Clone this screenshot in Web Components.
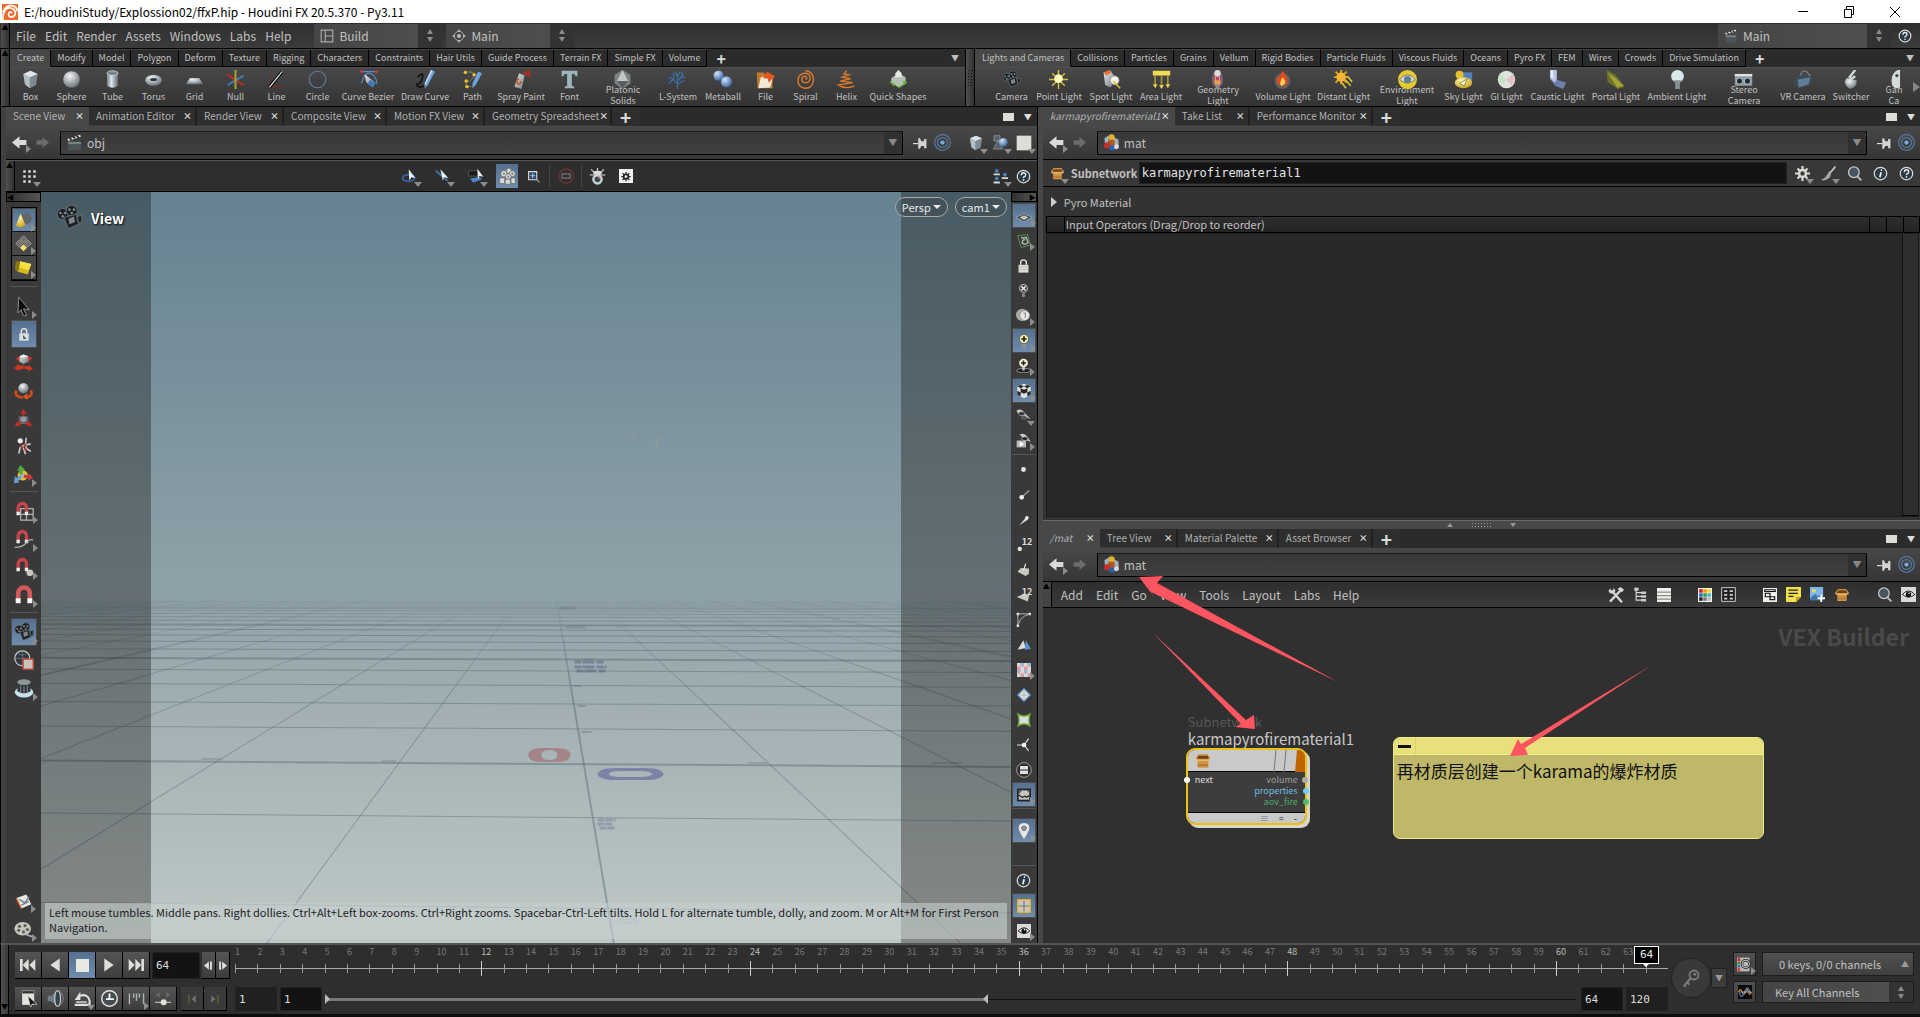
<!DOCTYPE html>
<html lang="en">
<head>
<meta charset="utf-8">
<title>E:/houdiniStudy/Explossion02/ffxP.hip - Houdini FX 20.5.370 - Py3.11</title>
<style>
    html, body {
        margin: 0;
        height: 100%;
        overflow: hidden;
        background: #2e2e2e;
    }
    body {
        --ui: "Noto Sans CJK SC", "Noto Sans", sans-serif;
        --mono: "DejaVu Sans Mono", "Liberation Mono", monospace;
        --text: #c0c0c0;
        --active: linear-gradient(#56708f, #6f8cad);
        font: 11px/16px var(--ui);
        color: var(--text);
    }
</style>
</head>
<body>
<app-shell>
    <title-bar slot="top">E:/houdiniStudy/Explossion02/ffxP.hip - Houdini FX 20.5.370 - Py3.11</title-bar>
    <menu-bar slot="top"></menu-bar>
    <shelf-row slot="top"></shelf-row>
    <scene-pane slot="left"></scene-pane>
    <param-pane slot="right"></param-pane>
    <network-pane slot="right"></network-pane>
    <play-bar slot="bottom"></play-bar>
</app-shell>

<script>
// shared gradients, repeated in every icon because ids do not cross shadow roots
const DEFS = `<defs>
    <linearGradient id="s" x1="0" y1="0" x2="1" y2="1"><stop offset="0" stop-color="#e8ecee"/><stop offset="1" stop-color="#6b767c"/></linearGradient>
    <linearGradient id="t" x1="0" y1="0" x2="1" y2="0"><stop offset="0" stop-color="#738088"/><stop offset=".4" stop-color="#dfe6ea"/><stop offset="1" stop-color="#5c676e"/></linearGradient>
    <radialGradient id="r" cx=".4" cy=".3" r=".7"><stop offset="0" stop-color="#f4f6f7"/><stop offset="1" stop-color="#6a757b"/></radialGradient>
    <radialGradient id="b" cx=".35" cy=".3" r=".7"><stop offset="0" stop-color="#d5e5f7"/><stop offset="1" stop-color="#3e6ba6"/></radialGradient>
    <radialGradient id="g" cx=".4" cy=".3" r=".8"><stop offset="0" stop-color="#fff7a8"/><stop offset="1" stop-color="#c59a10"/></radialGradient>
</defs>`;

const CAMERA = `<g fill="#1d2124" stroke="#5f686e" stroke-width="1"><circle cx="6" cy="9" r="5"/><circle cx="14" cy="6" r="5"/><path d="M7 12l11-3 2 9-9 4z"/><path d="M19 11l4-1v6l-3 1z"/></g><g fill="#7c868c"><circle cx="4" cy="8" r="1.200"/><circle cx="8" cy="8" r="1.200"/><circle cx="6" cy="11" r="1.200"/><circle cx="12" cy="5" r="1.200"/><circle cx="16" cy="5" r="1.200"/><circle cx="14" cy="8" r="1.200"/></g><path d="M11 13l5-2 1 5-5 2z" fill="#7d878d"/>`;
const MAGNET = `<path d="M5 14V8a5 5 0 0 1 10 0v6" fill="none" stroke="#c8464b" stroke-width="4"/><path d="M3 13h4v4H3zM13 13h4v4h-4z" fill="#f0f0f0"/>`;
const BULB = `<circle cx="12" cy="9" r="5.500" fill="#3a3d3e" stroke="#b9b9b9" stroke-width="1.500"/><path d="M10 16h4v5h-4z" fill="#8c8c8c"/>`;
const BOX = `<path d="M2 8l4-5h12l4 5-3 2v11H5V10z" fill="#cf9345"/><path d="M6 5h12l2 4H4z" fill="#6e431b"/><path d="M2 8l3 2h14l3-2 0 3-3 1H5l-3-1z" fill="#e8b872"/><path d="M5 16h14v3H5z" fill="#b87d33"/>`;
const LOCK = `<path d="M8 11V8a4 4 0 0 1 8 0v3" fill="none" stroke="#e6e6e6" stroke-width="2"/><path d="M5 11h14v11H5z" fill="#e0e0da"/>`;
const CUBE = `<path d="M3 5l9-4 9 4-2 14-8 4-6-5z" fill="#7f8a91"/><path d="M3 5l9-4 9 4-10 4z" fill="#dfe5e8"/><path d="M3 5l8 4v14l-6-5z" fill="#b4bfc5"/>`;
const CLAP = `<path d="M3 11h18v12H3z" fill="#4d5458"/><path d="M3 11h18v3H3z" fill="#7b8387"/><path d="M2 7l18-6 1 3-18 6z" fill="#ddd"/><path d="M5 6l3 2M10 4l3 2M15 3l3 2" stroke="#111" stroke-width="2"/>`;
const MAT = `<path d="M2 6l6-4v9l-5 4z" fill="#9fb3c8"/><path d="M14 4l8 4v9l-6 2z" fill="#a5b0ba"/><circle cx="12" cy="5" r="4.500" fill="#e0b52e"/><path d="M8 8h8l1 9H8z" fill="#b4571c"/><circle cx="6" cy="16" r="4.500" fill="#c9302b"/><path d="M9 16h8v7H9z" fill="#2f62ac"/><circle cx="19" cy="18" r="3.500" fill="#d6dade"/>`;
const RING = `<circle cx="12" cy="12" r="10" fill="#2c3a44" stroke="#d9d9d9" stroke-width="2"/>`;

const ICONS = {
    logo: `<rect width="24" height="24" fill="#ee6b2d"/><path d="M2 24c-2-8 2-19 11-18 7 1 9 8 5 12-4 3-9 1-8-3 0-3 4-4 5-1M1 12C5 4 10 2 14 2c6 1 9 5 9 9" fill="none" stroke="#fff" stroke-width="2.600"/>`,
    layout: `<path d="M2 2h20v20H2zM9 2v20M9 12h13" fill="none" stroke="#aaa" stroke-width="2"/>`,
    radial: `<circle cx="12" cy="12" r="8" fill="none" stroke="#aaa" stroke-width="1.600"/><circle cx="12" cy="12" r="3.500" fill="#bbb"/><path d="M12 0l3 5H9zM12 24l3-5H9zM0 12l5-3v6zM24 12l-5-3v6z" fill="#bbb"/>`,
    clap: CLAP,
    help: RING + `<path d="M8.500 10q0-4 3.500-4t3.500 3-3.500 4v1.500" fill="none" stroke="#eee" stroke-width="2.200"/><circle cx="12" cy="17.500" r="1.400" fill="#eee"/>`,
    info: RING + `<path d="M13 10l-2 8M12.500 6.500h2" fill="none" stroke="#eee" stroke-width="2.800"/>`,
    box: CUBE,
    sphere: `<circle cx="12" cy="12" r="10.500" fill="url(#r)"/>`,
    tube: `<path d="M5 4v16q7 5 14 0V4z" fill="url(#t)"/><ellipse cx="12" cy="4" rx="7" ry="3" fill="#77848b" stroke="#d5dce0"/>`,
    torus: `<ellipse cx="12" cy="13" rx="10.500" ry="7" fill="url(#r)"/><ellipse cx="12" cy="12" rx="4.500" ry="2" fill="#30373b"/>`,
    grid: `<path d="M6 10h12l5 8H1z" fill="url(#r)"/>`,
    null: `<path d="M2 6l20 13" stroke="#c62a22" stroke-width="2.500"/><path d="M2 19L22 7" stroke="#3f79b8" stroke-width="2.500"/><path d="M12 0v24" stroke="#a8a52a" stroke-width="2.500"/>`,
    line: `<path d="M6 3v18h16M2 17l18 5" stroke="#7b2b2b" fill="none"/><path d="M3 22L19 2" stroke="#111" stroke-width="4.500"/><path d="M3 22L19 2" stroke="#ddd" stroke-width="1.500"/>`,
    circle: `<circle cx="12" cy="12" r="10.500" fill="none" stroke="#5d7da6" stroke-width="1.400"/>`,
    bezier: `<path d="M2 2h20M3 17Q7 4 12 4q9 0 11 14" stroke="#5b89c0" fill="none" stroke-width="1.500"/><circle cx="3" cy="2" r="1.800" fill="#d33"/><circle cx="22" cy="2" r="1.800" fill="#d33"/><path d="M7 5l14 11-4 6-8-7z" fill="url(#s)"/><path d="M14 12l7 4-4 6-6-5z" fill="#4279b9"/>`,
    draw: `<path d="M2 9q8-8 6 1t-8 8q4 6 10 2" stroke="#111" fill="none" stroke-width="2.200"/><path d="M19 0l5 2-9 17-4 4v-6z" fill="#6fa3dd"/><path d="M19 0l2 1-9 18-1-2z" fill="#c4dcf5"/>`,
    path: `<path d="M3 3q15-2 10 6T4 14v7h6" stroke="#b9b9a4" fill="none" stroke-dasharray="2 1"/><path d="M19 2l5 2-8 15-4 4v-6z" fill="#6fa3dd"/><g fill="#ecc51d"><circle cx="3" cy="3" r="2.200"/><circle cx="14" cy="6" r="2.200"/><circle cx="4" cy="14" r="2.200"/><circle cx="5" cy="21" r="2.200"/></g>`,
    spray: `<path d="M9 4l7 3-4 17-9-3z" fill="url(#s)"/><path d="M9 11q-4 1-2 6 4 2 4-3" stroke="#c52" fill="none" stroke-width="2"/><path d="M12 3l11-3v10z" fill="#b32d26" opacity=".85"/>`,
    font: `<path d="M2 1h20v7h-2l-2-3h-3v15l3 1v2H6v-2l3-1V5H6L4 8H2z" fill="#9db4bd"/>`,
    platonic: `<path d="M12 0l10 6v11l-10 7-10-7V6z" fill="#7d8383"/><path d="M12 0l7 14H5z" fill="#c2c7c7"/><path d="M12 24l7-10H5z" fill="#595e5e"/>`,
    lsystem: `<path d="M12 24V5M12 17L3 9M12 14l8-9M12 18l9-5M7 13V3M3 9l-2 3M16 9l6 1M12 9L9 2M12 8l3-6M6 12L1 17M18 7l-1-5" stroke="#3c6fa8" fill="none" stroke-width="1.600"/>`,
    metaball: `<circle cx="7" cy="7" r="6.500" fill="url(#b)"/><circle cx="17" cy="15" r="7" fill="url(#b)"/>`,
    file: `<path d="M1 3h9l2 3h9v17H2z" fill="#c4792c"/><path d="M6 9l16-2-4 15-15 1z" fill="#f1eadb"/><path d="M14 2l10 6-8 8-1-5-6-1z" fill="#e3591a"/>`,
    spiral: `<path d="M12 12c3-1 1-4-1-4-5 0-5 8 1 8 8 0 8-12-1-12-11 0-12 19 1 19 6 0 10-4 10-11C22 5 17 1 12 1" stroke="#d77b2c" fill="none" stroke-width="1.800"/>`,
    helix: `<path d="M12 1l-3 4 6 1-8 3 10 2-13 3 16 2-18 3q9 6 20 1" stroke="#d9792b" fill="none" stroke-width="1.800"/>`,
    quick: `<path d="M1 15l7-6 15 6-10 8z" fill="#5db02c"/><path d="M3 10l9-6 9 5v8l-9 4-9-5z" fill="#b5beb5"/><path d="M8 4l4-4 4 4v5H8z" fill="#e4e9e2"/><path d="M1 15l6 2-1 4zM18 13l5 3-5 4z" fill="#5db02c"/>`,
    camera: CAMERA,
    point: `<path d="M12 0v24M0 12h24M4 4l16 16M20 4L4 20" stroke="#d8bd38" stroke-width="1.800"/><circle cx="12" cy="11" r="5.500" fill="#fffbb8"/>`,
    spot: `<path d="M2 3l9-2 6 9-6 12-7-3z" fill="url(#s)"/><path d="M2 3l7-3 3 3-7 4z" fill="#e4742b"/><circle cx="16" cy="13" r="5.500" fill="#f6f4e4" stroke="#999"/><path d="M14 14l9 9" stroke="#d8c43a" stroke-width="2"/>`,
    area: `<path d="M1 1h22v6H1z" fill="#f1dd54"/><path d="M4 7v13M12 7v15M20 7v13" stroke="#ae9a32" stroke-width="2"/><path d="M1 18h6l-3 5zM9 19h6l-3 5zM17 18h6l-3 5z" fill="#e8d44b"/>`,
    geo: `<ellipse cx="12" cy="12" rx="7" ry="11" fill="#8d6590" opacity=".8"/><circle cx="12" cy="4" r="4" fill="#dcdce0"/><path d="M9 8h6l1 8-3 6h-2l-3-6z" fill="#e9a345"/><path d="M10 9h4v4h-4z" fill="#b33f91"/><path d="M10 18h4v6h-4z" fill="#8a8f96"/>`,
    volume: `<circle cx="12" cy="14" r="10" fill="#83837f" opacity=".5"/><path d="M12 1q8 9 6 16-6 7-12 0-3-5 2-9z" fill="#e04a1e"/><path d="M12 9q6 6 2 9-4 4-5-1 0-4 3-8z" fill="#ffd255"/>`,
    distant: `<path d="M9 0v18M0 9h18M2 2l14 14M16 2L2 16" stroke="#e3a522" stroke-width="2.500"/><circle cx="9" cy="9" r="6" fill="#f5b42d"/><path d="M14 12l7 8M10 16l5 7M17 8l6 7" stroke="#d8c43a" stroke-width="2"/>`,
    env: `<circle cx="12" cy="12" r="12" fill="#e6cb2f"/><path d="M2 12q10-12 20 0-10 9-20 0z" fill="#d9d9cf" stroke="#5f6a72"/><circle cx="12" cy="12" r="4.500" fill="#5f7f95"/>`,
    sky: `<path d="M8 3h15v10H8z" fill="#5681b6"/><circle cx="7" cy="6" r="5" fill="#e9bd32"/><ellipse cx="12" cy="16" rx="11" ry="7" fill="url(#g)"/><path d="M7 17l10-6-4 9z" fill="#fff6c0" stroke="#775"/>`,
    gi: `<circle cx="12" cy="12" r="11" fill="#dfe2dd"/><path d="M4 5q-5 8 2 14l6-7z" fill="#c8e0c6"/><path d="M20 5q5 8-2 14l-6-7z" fill="#e0bfc6"/>`,
    caustic: `<path d="M3 0h8v12l12 4-4 8-10-4-6-8z" fill="#6d80ac"/><path d="M3 0h8v11l-2 5-6-5z" fill="#b9c6e6"/><path d="M3 0h3l1 11-4-2z" fill="#e3eafa"/>`,
    portal: `<path d="M1 0l11 6 12 15-9 3L2 15z" fill="#6c7328"/><path d="M2 3l10 7 10 10-8 2z" fill="#a4a337"/>`,
    ambient: `<circle cx="12" cy="8" r="8" fill="#d9e8e8"/><path d="M7 13h10l-2 4H9zM9 17h6v7H9z" fill="#869191"/>`,
    stereo: `<path d="M1 5h22v15H1z" fill="#8f9696"/><path d="M1 5h22v3H1z" fill="#dfe3e3"/><circle cx="7" cy="14" r="4" fill="#1e2c3c" stroke="#ddd"/><circle cx="17" cy="14" r="4" fill="#1e2c3c" stroke="#ddd"/>`,
    vr: `<path d="M1 9l16-4 7 6-2 9-15 3-6-5z" fill="#3c4852"/><path d="M6 12l16-3-2 9-13 4z" fill="#5e7c96"/><path d="M9 7q3-8 8-5l5 6" fill="none" stroke="#6e7980" stroke-width="2"/>`,
    switcher: `<path d="M18 0l-8 10M18 8l-9 6" stroke="#d5d9d9" stroke-width="3"/><path d="M7 10l13 3q0 10-9 11-7-5-6-10z" fill="url(#r)"/>`,
    gang: `<path d="M16 0q-10 5-7 19 3 6 10 3V0z" fill="#d5dada"/><circle cx="15" cy="7" r="2" fill="#444"/>`,
    back: `<path d="M0 12L12 2v6h11v8H12v6z" fill="#d9dbd8"/>`,
    fwd: `<path d="M24 12L12 2v6H1v8h11v6z" fill="#6c6c6c"/>`,
    pin: `<path d="M0 13h9" stroke="#ddd" stroke-width="2"/><path d="M9 4h3l2 5h5V5h4v16h-4v-4h-5l-2 5H9z" fill="#d4d4d4"/>`,
    target: `<g fill="none" stroke="#55779d" stroke-width="1.800"><circle cx="12" cy="12" r="11"/><circle cx="12" cy="12" r="7"/></g><circle cx="12" cy="12" r="3" fill="#79aade"/>`,
    shapes: `<path d="M3 1h9v8H3zM2 21L9 8l7 13z" fill="#596066" stroke="#9aa1a5"/><circle cx="17" cy="11" r="6.500" fill="url(#b)"/>`,
    blank: `<path d="M1 1h22v22H1z" fill="#dcdcd8"/>`,
    dots: `<g fill="#d8d8d8"><path d="M2 2h4v4H2zM10 2h4v4h-4zM18 2h4v4h-4zM2 10h4v4H2zM10 10h4v4h-4zM18 10h4v4h-4zM2 18h4v4H2zM10 18h4v4h-4z"/></g>`,
    tumble: `<ellipse cx="10" cy="15" rx="9" ry="5" fill="none" stroke="#34609a" stroke-width="3"/><path d="M10 2l10 13-6-1-3 5z" fill="#eee"/>`,
    track: `<path d="M1 4l18 15" stroke="#4171ab" stroke-width="3"/><path d="M8 2l12 13-7-1-1 6z" fill="#eee"/>`,
    dolly: `<path d="M1 4h14v8H1z" fill="#1b1b1b" stroke="#666"/><path d="M3 16l14-3 4 4-13 5z" fill="#4f86c7"/><path d="M14 1l9 12-6-1-2 5z" fill="#eee"/>`,
    stones: `<g fill="#d9dad6" stroke="#6b6f70"><circle cx="7" cy="8" r="4.500"/><circle cx="14" cy="4" r="3.500"/><circle cx="19" cy="8" r="4"/><circle cx="13" cy="12" r="4"/><path d="M1 14h7v8H1zM9 16h7v7H9zM17 14h6v8h-6z"/></g><g fill="#777"><circle cx="7" cy="8" r="1.500"/><circle cx="19" cy="8" r="1.500"/><circle cx="13" cy="12" r="1.300"/></g>`,
    zoombox: `<path d="M3 3h15v15H3z" fill="#33435a" stroke="#ddd" stroke-width="2"/><path d="M10.500 6v9M6 10.500h9" stroke="#7fb6ef" stroke-width="2.500"/><path d="M17 17l6 6" stroke="#aaa" stroke-width="2"/>`,
    stop: `<circle cx="12" cy="12" r="10.500" fill="none" stroke="#6d3333" stroke-width="2"/><path d="M6 9h12v6H6z" fill="none" stroke="#6d6d6d" stroke-width="2"/>`,
    bug: `<path d="M3 2l6 6M21 2l-6 6M12 0v5M1 10h22" stroke="#d9d9d9" stroke-width="1.500"/><ellipse cx="12" cy="7" rx="6" ry="3" fill="#ddd"/><circle cx="12" cy="16" r="7.500" fill="#c9d2d2"/><circle cx="12" cy="16" r="4" fill="#2d4b56"/><circle cx="14" cy="14" r="1.500" fill="#e55"/>`,
    gearbox: `<path d="M0 0h24v24H0z" fill="#f2f2f2"/><circle cx="12" cy="13" r="4" fill="none" stroke="#222" stroke-width="3"/><path d="M12 5v4M12 17v4M4 13h4M16 13h4M6 7l3 3M18 7l-3 3M6 19l3-3M18 19l-3-3" stroke="#222" stroke-width="2"/>`,
    people: `<g fill="#4b7fc0"><circle cx="6" cy="3" r="3"/><circle cx="19" cy="9" r="3"/><circle cx="6" cy="15" r="3"/></g><path d="M1 7h10v3H1zM14 13h10v3H14zM1 20h10v3H1z" fill="#d8d8d8"/>`,
    cone: `<circle cx="16" cy="9" r="7.500" fill="#62676b"/><path d="M8 2l7 17q-7 5-14 0z" fill="url(#g)"/>`,
    tiles: `<path d="M12 1l5 5-5 5-5-5zM6 7l5 5-5 5-5-5zM18 7l5 5-5 5-5-5z" fill="#727068" stroke="#aaa"/><path d="M12 13l5 5-5 5-5-5z" fill="#f1dd76"/>`,
    ycube: `<path d="M7 3l16 4-5 15-14-4z" fill="#d7ba19"/><path d="M7 3l16 4-4 9-12-4z" fill="#f5e043"/><path d="M1 3l6 1-3 14-4-3z" fill="#8a7718"/>`,
    arrow: `<path d="M6 0l13 16-7-1 4 8-4 1-3-8-4 4z" fill="#0a0a0a" stroke="#aaa"/>`,
    lock: LOCK + `<path d="M10 13l6 6-5 1z" fill="#4b688c"/>`,
    move: `<path d="M0 19l6-5v2l6-1v5l-6 1v2zM24 20l-6-5v2l-5-1v4l5 1v2zM2 7l5-3v7zM23 6l-5-2v8z" fill="#d23620"/><path d="M7 4l5-2 6 2v7l-6 3-5-3z" fill="url(#s)"/><path d="M7 4l5-2 6 2-6 2z" fill="#eef1f3"/>`,
    rotate: `<path d="M3 12q-3 8 8 9M21 12q4 7-6 9" stroke="#cf4a1e" stroke-width="3.500" fill="none"/><path d="M17 15v9l-6-4z" fill="#e4571f"/><circle cx="12" cy="9" r="6.500" fill="url(#r)"/>`,
    scale: `<path d="M12 0l4 6H8zM1 22l3-7 5 6zM23 22l-7-1 4-6z" fill="#c52b22"/><path d="M6 9h12v10H6z" fill="#62686b"/><path d="M12 5v6M5 19l5-4M19 20l-5-4" stroke="#c52b22" stroke-width="2"/><circle cx="12" cy="13" r="3.500" fill="#8da0ab"/>`,
    pose: `<circle cx="7" cy="5" r="3.500" fill="#eee"/><path d="M15 1l-1 9-7 4-2 8M13 10l3 6 5 3M14 11l7-2M11 14l3 9" stroke="#d0d0d0" stroke-width="2" fill="none"/><path d="M12 9l3 3M13 15l2 3M8 12l2 3" stroke="#b7322d" stroke-width="3"/>`,
    handle: `<circle cx="11" cy="13" r="6.500" fill="#e3c32a"/><circle cx="11" cy="13" r="3" fill="#a4b9c9"/><path d="M8 0l6 6-3 1v5H7V8L4 7z" fill="#57a53a"/><path d="M24 16l-6 4v-3l-6-1 1-4 5 1 1-3z" fill="#c83b3b"/><path d="M0 23l1-9 2 2 5-3 2 4-5 3 2 2z" fill="#6d9dce"/>`,
    maggrid: `<path d="M8 9h15v14H8zM8 16h15M15 9v14" fill="none" stroke="#aeb4b2" stroke-width="1.500"/>` + MAGNET,
    magcurve: MAGNET + `<path d="M1 22q10 0 14-6 3-4 8-3" fill="none" stroke="#a9b5ae" stroke-width="1.500"/>`,
    magpoint: MAGNET + `<circle cx="19" cy="19" r="4" fill="#c9c9c0"/>`,
    magnet: `<path d="M5 17v-7a7 7 0 0 1 14 0v7" fill="none" stroke="#d45a5a" stroke-width="5.500"/><path d="M2 16h6v6H2zM16 16h6v6h-6z" fill="#f4f4f4"/>`,
    globe: `<circle cx="10" cy="10" r="9" fill="#30393b" stroke="#c5cccc" stroke-width="1.500"/><path d="M10 1v18M1 10h18M4 4q6 4 12 0" stroke="#69787b" fill="none"/><path d="M11 11h12v12H11z" fill="#c9c3bb" stroke="#d0453f" stroke-width="1.500"/>`,
    cap: `<ellipse cx="12" cy="17" rx="11" ry="6.500" fill="#c7e3ef"/><path d="M4 5h16v11q-8 5-16 0z" fill="#30383c"/><ellipse cx="12" cy="5" rx="8" ry="3.500" fill="#8e989c"/><path d="M8 9v8M12 10v8M16 9v8" stroke="#8e989c"/>`,
    sketch: `<path d="M2 7l14-5 7 14-14 6z" fill="#e8e8e2"/><path d="M2 8l7 14" stroke="#cf5a2d" stroke-width="2"/><path d="M6 9l8 5 6-9M9 17l10-5" stroke="#6d8091" stroke-width="2" fill="none"/>`,
    reel: `<ellipse cx="11" cy="11" rx="10.500" ry="8.500" fill="#c7c7bd"/><g fill="#5e5e58"><circle cx="7" cy="8" r="2"/><circle cx="14" cy="7" r="2"/><circle cx="17" cy="12" r="2"/><circle cx="6" cy="13" r="2"/><circle cx="12" cy="15" r="2"/></g><path d="M14 18l9 3" stroke="#aaa" stroke-width="2"/>`,
    plane: `<path d="M0 14l12-6 12 6-12 7z" fill="#3e4b58" stroke="#b9bab4"/><path d="M6 14l6-3 6 3-6 4z" fill="#d9d9d0"/><path d="M6 11l12 6M18 11L6 17" stroke="#9a9a94"/>`,
    greenbox: `<path d="M1 3l17-2 5 18-16 4z" fill="none" stroke="#5c9b4c" stroke-width="1.500"/><path d="M7 7l9-1 3 9q-7 5-10 0 0-6 5-5" fill="none" stroke="#aab9aa" stroke-width="2.500"/>`,
    padlock: LOCK + `<path d="M5 14h14M5 18h14" stroke="#aaa"/>`,
    bulboff: BULB + `<path d="M9 6l6 6M15 6l-6 6" stroke="#eee" stroke-width="2"/>`,
    balls: `<circle cx="10" cy="11" r="10" fill="#a8aca9"/><circle cx="14" cy="12" r="8" fill="#e4e5e1" stroke="#777"/><path d="M12 8h3v8" stroke="#999" stroke-width="2" fill="none"/>`,
    bulbon: `<circle cx="12" cy="9" r="7" fill="#ebe7a5" stroke="#444"/><path d="M9 16h6v6H9z" fill="#909090"/><path d="M12 5v8M8 9h8" stroke="#222" stroke-width="2.500"/>`,
    bulbring: `<ellipse cx="12" cy="20" rx="11" ry="3.500" fill="#191919" stroke="#ccc"/><circle cx="12" cy="8" r="7" fill="#f8f6d5"/><path d="M10 14h4v6h-4z" fill="#c9c9c9"/><path d="M12 4v8M8 8h8" stroke="#222" stroke-width="2.500"/>`,
    checker: `<path d="M2 5l10-4 10 4v13l-10 5-10-5z" fill="#e2e2dc"/><path d="M2 5l5-2 5 2-5 3zM12 5l5-2 5 2-5 3zM7 8l5 2v6l-5-2zM12 10l5-2v6l-5 2zM2 12l5 2v6l-5-2zM17 14l5-2v6l-5 2z" fill="#26292c"/>`,
    spoons: `<path d="M1 4q8-4 12 3l10 10-13-4-8-6z" fill="#c4c9c9"/><ellipse cx="9" cy="9" rx="5" ry="3" fill="#333" stroke="#aaa"/><ellipse cx="13" cy="15" rx="4" ry="2.500" fill="#444" stroke="#999"/>`,
    spoonplay: `<path d="M6 2q8-3 12 4l6 8-11-3z" fill="#c4c9c9"/><ellipse cx="14" cy="9" rx="5" ry="3" fill="#222" stroke="#ccc"/><path d="M1 12h15v11H1z" fill="#b8bab7"/><path d="M6 13v9l7-4z" fill="#fff"/>`,
    dot: `<circle cx="12" cy="12" r="3.500" fill="#e5e5de"/>`,
    normal: `<path d="M7 17L21 4" stroke="#a9b4b9" stroke-width="2"/><circle cx="8" cy="16" r="4" fill="#eee"/>`,
    normal2: `<path d="M4 21L16 7l3 4z" fill="#ddd"/><circle cx="17" cy="8" r="3" fill="#eee"/>`,
    num: `<circle cx="6" cy="19" r="3.500" fill="#e5e5de"/>`,
    prim: `<path d="M1 16l6-7 15 1v10l-6 4z" fill="#c8c8c3"/><path d="M12 14l4-13" stroke="#eee" stroke-width="2"/>`,
    primnum: `<path d="M1 16l11-5 9 2-2 10z" fill="#c8c8c3"/>`,
    curve: `<path d="M3 3h19M3 3v19M20 4Q6 8 4 20" stroke="#c8c8c8" fill="none" stroke-width="1.300"/><path d="M1 1h4v4H1zM20 1h4v4h-4zM1 20h4v4H1z" fill="#ddd"/>`,
    hull: `<path d="M1 20L11 4l4 13z" fill="#ddd"/><path d="M15 4l9 15-11 1z" fill="#5d8fcb"/>`,
    uv: `<path d="M0 0h24v24H0z" fill="#ded9d5"/><path d="M0 6h6v6H0zM12 6h6v6h-6zM6 18h6v6H6zM18 18h6v6h-6z" fill="#df9e9b"/><path d="M6 0h6v6H6zM18 0h6v6h-6zM0 12h6v6H0zM12 12h6v6h-6z" fill="#9cb8d8"/>`,
    diamond: `<path d="M12 1l11 11-11 11L1 12z" fill="#e2e2dc" stroke="#4f88c6" stroke-width="2"/><path d="M5 12h14M12 5v14" stroke="#999"/>`,
    greenstar: `<path d="M2 2q5 4 10 3 5 1 10-3-3 10 0 20-5-4-10-3-5-1-10 3 3-10 0-20z" fill="#ddded8" stroke="#6bb03e" stroke-width="2.500"/>`,
    axes: `<path d="M12 12H0M12 12l8-11M12 12l8 10" stroke="#e0e0da" stroke-width="2"/><circle cx="12" cy="12" r="4" fill="#f3f3ee"/>`,
    list: `<circle cx="12" cy="12" r="11" fill="#2e2e2e" stroke="#a0a0a0" stroke-width="1.500"/><path d="M6 6h12v12H6z" fill="#e0e0dc"/><path d="M6 12h12" stroke="#555" stroke-width="2"/>`,
    image: `<path d="M0 1h24v22H0z" fill="#222"/><path d="M3 4h18v16H3z" fill="#c4c5c0"/><path d="M3 11l6-7H3zM16 4l5 4V4z" fill="#555"/><path d="M3 12l6 4 5-2 3 2 4-3" fill="none" stroke="#222" stroke-width="2"/>`,
    mappin: `<path d="M12 0q9 0 8 9-2 6-8 15Q6 15 4 9q-1-9 8-9z" fill="#e6e6e2"/><circle cx="12" cy="8" r="3.500" fill="#8693a3" stroke="#555"/>`,
    quad: `<path d="M1 1h22v22H1z" fill="#cdc9be" stroke="#e0b21c" stroke-width="2.500"/><path d="M12 3v18M3 12h18" stroke="#777" stroke-width="2"/>`,
    eye: `<path d="M0 0h24v24H0z" fill="#d9d9d6"/><path d="M2 12q10-11 20 0-10 8-20 0z" fill="#f8f8f8" stroke="#111" stroke-width="1.500"/><circle cx="12" cy="12" r="4.500" fill="#111"/><circle cx="13" cy="10" r="1.300" fill="#fff"/>`,
    mat: MAT,
    crate: BOX,
    gear: `<path d="M12 0v24M0 12h24M4 4l16 16M20 4L4 20" stroke="#d9d9d6" stroke-width="3.500"/><circle cx="12" cy="12" r="7.500" fill="#d9d9d6"/><circle cx="12" cy="12" r="3.500" fill="#3a3a3a"/>`,
    brush: `<path d="M23 1L12 14" stroke="#ccc" stroke-width="2.500"/><path d="M13 8q6 6-1 12-8 5-12 2 8-2 13-14z" fill="#a8a8a2"/>`,
    lens: `<circle cx="11" cy="10" r="8.500" fill="#465560" stroke="#c9c9c9" stroke-width="2"/><path d="M16 16l7 7" stroke="#bbb" stroke-width="3"/>`,
    tools: `<path d="M6 6l15 17M20 4L3 22" stroke="#d5d5d5" stroke-width="3.500"/><path d="M1 5q0 5 5 5t5-5l-3-4v4H4V2z" fill="#d5d5d5"/><path d="M14 3l5-3 5 4-3 4z" fill="#d5d5d5"/>`,
    tree: `<path d="M5 1v20h10M5 9h10M5 15h10" stroke="#d6d6d6" stroke-width="1.800" fill="none"/><path d="M2 1h7v5H2zM13 7h8v4h-8zM13 13h8v4h-8zM13 19h8v4h-8z" fill="#c9c9c9"/>`,
    rows: `<path d="M0 0h24v24H0z" fill="#efefeb"/><path d="M0 7h24M0 13h24M0 19h24" stroke="#8d8d8d" stroke-width="2"/>`,
    palette: `<path d="M0 0h24v24H0z" fill="#f4f4f4"/><path d="M2 2h6v6H2z" fill="#e01b1b"/><path d="M9 2h6v6H9z" fill="#e89c1b"/><path d="M16 2h6v6h-6z" fill="#f1df23"/><path d="M2 9h6v6H2z" fill="#3164c4"/><path d="M9 9h6v6H9z" fill="#28a64a"/><path d="M16 9h6v6h-6z" fill="#45b8c8"/><path d="M2 16h6v6H2z" fill="#222"/><path d="M9 16h6v6H9z" fill="#777"/><path d="M16 16h6v6h-6z" fill="#bbb"/>`,
    table: `<path d="M1 1h22v22H1z" fill="#222" stroke="#cfcfcf" stroke-width="1.500"/><path d="M5 5h5v3H5zM14 5h5v3h-5zM5 11h5v3H5zM14 11h5v3h-5zM5 17h5v3H5zM14 17h5v3h-5z" fill="#cfcfcf"/>`,
    flow: `<path d="M0 0h24v24H0z" fill="#efefeb"/><path d="M3 3h18v3H3zM4 9h8v6H4zM12 15h8v5h-8z" fill="none" stroke="#111" stroke-width="2"/>`,
    sticky: `<path d="M0 0h24v16l-8 8H0z" fill="#f1df4f"/><path d="M4 5h15M4 10h15M4 15h8" stroke="#222" stroke-width="2"/><path d="M16 24v-8h8z" fill="#b7a122"/>`,
    addimg: `<path d="M0 0h21v21H0z" fill="#7fb6ec"/><circle cx="6" cy="6" r="3" fill="#f1df4f"/><path d="M0 18l8-7 5 4 4-4 4 5v5H0z" fill="#3e77a8"/><path d="M18 12v12M12 18h12" stroke="#fff" stroke-width="3"/>`,
    first: `<path d="M0 3h4v18H0zM13 3v18L4 12zM23 3v18l-9-9z" fill="#dededa"/>`,
    prev: `<path d="M20 1v22L4 12z" fill="#dededa"/>`,
    halt: `<path d="M0 0h24v24H0z" fill="#e8e8e4"/>`,
    play: `<path d="M4 1v22l16-11z" fill="#dededa"/>`,
    last: `<path d="M24 3h-4v18h4zM11 3v18l9-9zM1 3v18l9-9z" fill="#dededa"/>`,
    stepb: `<path d="M13 1v22L0 12zM16 1h5v22h-5z" fill="#dededa"/>`,
    stepf: `<path d="M11 1v22l13-11zM3 1h5v22H3z" fill="#dededa"/>`,
    anim: `<path d="M3 1h17v20H3z" fill="#e2e2de"/><path d="M3 1h17v4H3z" fill="#333" stroke="#999"/><path d="M11 8l13 12-7 0-2 5z" fill="#111" stroke="#ddd"/>`,
    speaker: `<path d="M1 8h5l9-7v22l-9-7H1z" fill="#6e7d86"/><ellipse cx="15" cy="12" rx="4" ry="11" fill="#33434c" stroke="#d6dcdf" stroke-width="1.500"/><path d="M20 4q6 8 0 16" fill="none" stroke="#999"/>`,
    loop: `<path d="M1 21h21v-6q-2-10-14-7" fill="none" stroke="#e0e0dc" stroke-width="3"/><path d="M3 17h15" stroke="#e0e0dc" stroke-width="2"/><path d="M9 2v12H1z" fill="#e0e0dc"/>`,
    clock: `<circle cx="12" cy="12" r="11" fill="#454d50" stroke="#e6e6e2" stroke-width="2"/><path d="M12 5v8h6M12 13H7" stroke="#fff" stroke-width="2.500" fill="none"/>`,
    snap: `<path d="M2 5v15M8 5v6M12 5v10M16 5v6M22 5v15" stroke="#aeb3b5" stroke-width="2"/>`,
    keyrow: `<path d="M0 17h24" stroke="#b0b0aa" stroke-width="2"/><circle cx="13" cy="17" r="4.500" fill="#e0e0da"/><path d="M7 2v8L1 6zM17 2v8l6-4z" fill="#6b6b6b"/>`,
    kprev: `<path d="M3 2h4v20H3z" fill="#4d6239"/><path d="M21 3v18l-10-9z" fill="#707070"/>`,
    knext: `<path d="M17 2h4v20h-4z" fill="#4d6239"/><path d="M3 3v18l10-9z" fill="#707070"/>`,
    key: `<g fill="none" stroke="#7b7b7b" stroke-width="2.500"><circle cx="16" cy="8" r="6"/><path d="M12 12L3 22M6 17l4 4M2 21l3 3"/></g><circle cx="17" cy="7" r="2" fill="#7b7b7b"/>`,
    scope: `<path d="M0 1h20v22H0z" fill="#b9b9b3"/><path d="M1 2h4v5H1z" fill="#c22"/><path d="M1 8h4v4H1z" fill="#2a8b3a"/><path d="M1 13h4v4H1z" fill="#36c"/><path d="M1 18h4v4H1z" fill="#d22"/><circle cx="14" cy="11" r="6" fill="none" stroke="#222" stroke-width="4"/><circle cx="14" cy="11" r="6" fill="none" stroke="#ddd" stroke-width="1.500"/>`,
    wave: `<path d="M0 0h24v24H0z" fill="#0b0b0b"/><path d="M1 12q3-8 6 0t6 0 5 0 5 0" fill="none" stroke="#e58a2b" stroke-width="2"/><path d="M2 13q4 12 8 2t6-10 6 9" fill="none" stroke="#4b86cf" stroke-width="2"/><path d="M1 12h22" stroke="#ddd"/>`,
};

const BASE = `
    :host, * { box-sizing: border-box; }
    button, input, select {
        font: inherit;
        color: inherit;
        margin: 0;
        padding: 0;
        border: 0;
        background: none;
        border-radius: 0;
        appearance: none;
        outline: none;
    }
    button { display: flex; align-items: center; justify-content: center; flex: none; }
    .grow { flex: 1; min-width: 0; }
`;

class UiElement extends HTMLElement {
    constructor() {
        super();
        this.attachShadow({ mode: 'open' });
    }

    connectedCallback() {
        this.shadowRoot.innerHTML = `<style>${BASE}${this.styles()}</style>${this.template()}`;
    }

    styles() { return ''; }
    template() { return '<slot></slot>'; }
}

class UiIcon extends UiElement {
    styles() {
        const size = this.getAttribute('size') || 18;
        return `
            :host { display: inline-flex; flex: none; width: ${size}px; height: ${size}px; position: relative; }
            svg { width: 100%; height: 100%; display: block; }
            i { position: absolute; right: -4px; bottom: -3px; border: 4px solid transparent; }
            i.down { border-top: 5px solid #8d8d8d; border-bottom: 0; }
            i.right { border-left: 5px solid #8d8d8d; border-right: 0; }
            b { position: absolute; right: -1px; top: 0; font: bold 9px/9px var(--ui); color: #ddd; }
        `;
    }

    template() {
        const menu = this.getAttribute('menu');
        const num = this.getAttribute('num');
        return `<svg viewBox="0 0 24 24" aria-hidden="true">${DEFS}${ICONS[this.getAttribute('name')] || ''}</svg>
            ${menu ? `<i class="${menu}"></i>` : ''}${num ? `<b>${num}</b>` : ''}`;
    }
}
customElements.define('ui-icon', UiIcon);

const icon = (name, size = 18, menu = '', num = '') => `<ui-icon name="${name}" size="${size}" menu="${menu}" num="${num}"></ui-icon>`;
const iconButton = (name, size, menu, cls = '') => `<button class="${cls}" aria-label="${name}">${icon(name, size, menu)}</button>`;

class AppShell extends UiElement {
    styles() {
        return `
            :host { display: flex; flex-direction: column; height: 100vh; }
            .top, .bottom { flex: none; }
            .work { flex: 1; min-height: 0; display: grid; grid-template-columns: 54fr 46fr; }
            .left { min-width: 0; display: flex; padding-left: 5px; border-left: 1px solid #000; background: #414141; }
            .right { min-width: 0; min-height: 0; display: grid; grid-template-rows: 422px 1fr; padding-left: 5px; background: #484848; border-left: 1px solid #000; }
        `;
    }

    template() {
        return `
            <div class="top"><slot name="top"></slot></div>
            <div class="work">
                <div class="left"><slot name="left"></slot></div>
                <div class="right"><slot name="right"></slot></div>
            </div>
            <div class="bottom"><slot name="bottom"></slot></div>
        `;
    }
}
customElements.define('app-shell', AppShell);

class TitleBar extends UiElement {
    styles() {
        return `
            :host { display: flex; align-items: center; height: 23px; background: #fff; color: #000; font-size: 12px; padding: 0 2px; }
            .grow { padding-left: 6px; }
            button { width: 46px; height: 23px; }
            svg { width: 12px; height: 12px; fill: none; stroke: #000; }
        `;
    }

    template() {
        return `
            ${icon('logo', 16)}
            <span class="grow"><slot></slot></span>
            <button aria-label="Minimize"><svg><path d="M1 5.500h10"/></svg></button>
            <button aria-label="Restore"><svg><path d="M1.500 3.500h7v8h-7zM3.500 3.500v-3h7v8h-2"/></svg></button>
            <button aria-label="Close"><svg><path d="M1 1l10 10M11 1L1 11"/></svg></button>
        `;
    }
}
customElements.define('title-bar', TitleBar);

// drop-down with an icon in front and an up/down stepper behind
class UiCombo extends UiElement {
    styles() {
        return `
            :host { display: flex; align-items: center; height: 24px; background: linear-gradient(90deg, #454545, #505050); }
            label { display: flex; align-items: center; gap: 5px; flex: 1; padding-left: 6px; }
            select { flex: 1; min-width: 0; }
            span { display: flex; flex-direction: column; align-items: center; justify-content: center; gap: 3px; width: 24px; align-self: stretch; background: #333; }
            span::before, span::after { content: ""; border: 3px solid transparent; }
            span::before { border-top: 0; border-bottom: 5px solid #8a8a8a; }
            span::after { border-bottom: 0; border-top: 5px solid #8a8a8a; }
        `;
    }

    template() {
        const name = this.getAttribute('icon');
        const text = this.getAttribute('text');
        return `<label>${name ? icon(name, 14) : ''}<select aria-label="${text}"><option>${text}</option></select></label><span></span>`;
    }
}
customElements.define('ui-combo', UiCombo);

class MenuBar extends UiElement {
    styles() {
        return `
            :host { display: flex; align-items: center; height: 26px; font-size: 12px; padding: 0 8px 0 1px; background: linear-gradient(#2f2f2f, #3b3b3b); border-bottom: 1px solid #000; }
            .grip { width: 9px; height: 25px; background: linear-gradient(90deg, #505050, #303030); border-right: 1px solid #000; margin-right: 6px; text-align: center; font-size: 7px; line-height: 9px; color: #000; }
            nav { display: flex; gap: 9px; margin-right: 23px; }
            ui-combo { width: 128px; margin-right: 4px; }
            .take { width: 173px; margin-right: 7px; }
        `;
    }

    template() {
        return `
            <div class="grip">▲</div>
            <nav>${['File', 'Edit', 'Render', 'Assets', 'Windows', 'Labs', 'Help'].map(m => `<button>${m}</button>`).join('')}</nav>
            <ui-combo icon="layout" text="Build"></ui-combo>
            <ui-combo icon="radial" text="Main"></ui-combo>
            <span class="grow"></span>
            <ui-combo class="take" icon="clap" text="Main"></ui-combo>
            ${iconButton('help', 14)}
        `;
    }
}
customElements.define('menu-bar', MenuBar);

const SHELVES = [
    {
        tabs: ['Create', 'Modify', 'Model', 'Polygon', 'Deform', 'Texture', 'Rigging', 'Characters', 'Constraints', 'Hair Utils', 'Guide Process', 'Terrain FX', 'Simple FX', 'Volume'],
        tools: [['box', 'Box', 41], ['sphere', 'Sphere', 41], ['tube', 'Tube', 41], ['torus', 'Torus', 41], ['grid', 'Grid', 41], ['null', 'Null', 41], ['line', 'Line', 41], ['circle', 'Circle', 41], ['bezier', 'Curve Bezier', 60], ['draw', 'Draw Curve', 54], ['path', 'Path', 41], ['spray', 'Spray Paint', 56], ['font', 'Font', 41], ['platonic', 'Platonic<br>Solids', 66], ['lsystem', 'L-System', 44], ['metaball', 'Metaball', 46], ['file', 'File', 39], ['spiral', 'Spiral', 41], ['helix', 'Helix', 41], ['quick', 'Quick Shapes', 62]],
    },
    {
        tabs: ['Lights and Cameras', 'Collisions', 'Particles', 'Grains', 'Vellum', 'Rigid Bodies', 'Particle Fluids', 'Viscous Fluids', 'Oceans', 'Pyro FX', 'FEM', 'Wires', 'Crowds', 'Drive Simulation'],
        tools: [['camera', 'Camera', 43], ['point', 'Point Light', 52], ['spot', 'Spot Light', 52], ['area', 'Area Light', 48], ['geo', 'Geometry<br>Light', 66], ['volume', 'Volume Light', 64], ['distant', 'Distant Light', 57], ['env', 'Environment<br>Light', 70], ['sky', 'Sky Light', 43], ['gi', 'GI Light', 43], ['caustic', 'Caustic Light', 59], ['portal', 'Portal Light', 58], ['ambient', 'Ambient Light', 64], ['stereo', 'Stereo<br>Camera', 70], ['vr', 'VR Camera', 48], ['switcher', 'Switcher', 48], ['gang', 'Gan<br>Ca', 38]],
    },
];

class ToolShelf extends UiElement {
    styles() {
        return `
            :host { display: flex; flex-direction: column; min-width: 0; overflow: hidden; font-size: 9px; line-height: 12px; }
            .tabs { display: flex; height: 18px; background: #2b2b2b; }
            .tabs button { padding: 0 6px; white-space: nowrap; border-right: 1px solid #000; border-bottom: 1px solid #000; border-top: 1px solid #444; background: #2b2b2b; }
            .tabs button.on { padding-left: 7px; background: #484848; border-bottom-color: #484848; }
            .tabs .add { border: 0; font: bold 16px/18px var(--ui); color: #ddd; padding: 0 9px; }
            .tabs .more { border: 0; font-size: 8px; }
            .tools { flex: 1; display: flex; background: linear-gradient(#484848, #333); border-top: 1px solid #505050; }
            .right { padding-left: 15px; }
            .tools button { display: grid; grid-template-rows: 20px 16px; justify-items: center; align-items: center; white-space: nowrap; align-content: start; padding-top: 1px; flex-shrink: 0; }
            .tools .two { display: grid; grid-template-rows: 11px 11px; line-height: 11px; align-self: start; justify-items: center; margin-top: -5px; }
            .tools .next { display: flex; padding: 0; margin-left: auto; margin-right: 4px; }
            .next::before { content: ""; border: 5px solid transparent; border-left: 7px solid #888; border-right: 0; }
        `;
    }

    label(text) {
        const lines = text.split('<br>');
        return lines.length > 1
            ? `<span class="two">${lines.map(l => `<span>${l}</span>`).join('')}</span>`
            : `<span>${text}</span>`;
    }

    template() {
        const shelf = SHELVES[this.getAttribute('shelf')];
        const second = this.getAttribute('shelf') === '1';
        return `
            <div class="tabs" role="tablist">
                ${shelf.tabs.map((t, i) => `<button role="tab" class="${i ? '' : 'on'}">${t}</button>`).join('')}
                <button class="add" aria-label="Add shelf">+</button><span class="grow"></span><button class="more" aria-label="Shelf menu">▼</button>
            </div>
            <div class="tools ${second ? 'right' : ''}">
                ${shelf.tools.map(([name, label, w]) => `<button style="width:${w}px">${icon(name, 19)}${this.label(label)}</button>`).join('')}
                ${second ? '<button class="next" aria-label="More tools"></button>' : ''}
            </div>
        `;
    }
}
customElements.define('tool-shelf', ToolShelf);

class ShelfRow extends UiElement {
    styles() {
        return `
            :host { display: grid; grid-template-columns: 9px 955fr 10px 945fr; height: 58px; border-bottom: 1px solid #000; border-left: 1px solid #000; }
            div { background: linear-gradient(90deg, #505050, #303030); border-right: 1px solid #000; text-align: center; font-size: 7px; line-height: 9px; color: #000; }
            .mid { display: flex; align-items: center; justify-content: center; border-left: 1px solid #000; }
            .mid::before { content: ""; width: 6px; height: 18px; background: radial-gradient(#111 1px, transparent 1px) 0 0 / 3px 3px; }
        `;
    }

    template() {
        return `<div>▲</div><tool-shelf shelf="0"></tool-shelf><div class="mid"></div><tool-shelf shelf="1"></tool-shelf>`;
    }
}
customElements.define('shelf-row', ShelfRow);

// tabs="Name:width,Name:width"; the first one is the current tab
class PaneTabs extends UiElement {
    styles() {
        return `
            :host { display: flex; height: 19px; flex: none; background: #2b2b2b; font-size: 10px; }
            button { justify-content: space-between; padding: 0 3px 0 7px; white-space: nowrap; border-right: 2px solid #202020; border-bottom: 1px solid #3a3a3a; background: #2e2e2e; color: #b0b0b0; }
            .on { background: #484848; border-color: #484848; }
            em { font-style: italic; }
            b { font-size: 9px; color: #ddd; }
            .add { font: bold 19px/18px var(--ui); color: #ddd; border: 0; padding: 0 8px; }
            .sq { border: 0; background: none; padding: 0; width: 12px; }
            .sq::before { content: ""; width: 11px; height: 8px; background: #dcdcd8; }
            .more { border: 0; background: none; font-size: 8px; padding: 0 5px 0 9px; color: #ddd; }
        `;
    }

    template() {
        const tabs = this.getAttribute('tabs').split(',').map(t => t.split(':'));
        const tag = this.hasAttribute('italic') ? 'em' : 'span';
        return `
            ${tabs.map(([t, w], i) => `<button role="tab" class="${i ? '' : 'on'}" style="width:${w}px">${i ? t : `<${tag}>${t}</${tag}>`}<b>×</b></button>`).join('')}
            <button class="add" aria-label="New tab">+</button><span class="grow"></span>
            <button class="sq" aria-label="Maximize"></button><button class="more" aria-label="Pane menu">▼</button>
        `;
    }
}
customElements.define('pane-tabs', PaneTabs);

class PathBar extends UiElement {
    styles() {
        return `
            :host { display: flex; align-items: center; flex: none; height: 34px; padding: 0 5px 0 6px; background: linear-gradient(#484848, #363636); border-bottom: 1px solid #000; font-size: 12px; }
            .nav { display: flex; gap: 9px; width: 48px; }
            .field { flex: 1; display: flex; align-items: center; height: 24px; border: 1px solid #000; border-top-color: #1a1a1a; background: linear-gradient(#383838, #404040); padding-left: 5px; gap: 4px; }
            input { flex: 1; min-width: 0; }
            .field button { width: 18px; align-self: stretch; background: #303030; color: #888; font-size: 9px; }
            .end { display: flex; gap: 7px; margin-left: 10px; }
            .extra { display: flex; gap: 8px; margin-left: 17px; }
        `;
    }

    template() {
        return `
            <div class="nav">${iconButton('back', 15, 'right')}${iconButton('fwd', 13)}</div>
            <div class="field">${icon(this.getAttribute('icon'), 17)}<input aria-label="Network path" value="${this.getAttribute('path')}"><button aria-label="Path history">▼</button></div>
            <div class="end">${iconButton('pin', 14)}${iconButton('target', 17)}</div>
            ${this.hasAttribute('extra') ? `<div class="extra">${iconButton('box', 16, 'down')}${iconButton('shapes', 16, 'down')}${iconButton('blank', 16, 'down')}</div>` : ''}
        `;
    }
}
customElements.define('path-bar', PathBar);

class SideToolbar extends UiElement {
    styles() {
        const left = this.getAttribute('side') === 'left';
        return `
            :host { display: flex; flex-direction: column; align-items: center; flex: none; width: ${left ? 35 : 26}px; background: #393939; }
            .grip { align-self: stretch; height: 10px; border: 1px solid #000; background: linear-gradient(90deg, #303030, #555); font-size: 7px; line-height: 8px; color: #000; text-align: ${left ? 'left' : 'right'}; margin-bottom: ${left ? 5 : 1}px; }
            button { width: ${left ? 26 : 24}px; height: ${left ? 28 : 25}px; }
            .on { background: var(--active); border: 1px solid #4b4b4b; }
            .group { border: 1px solid #000; background: #484848; margin-bottom: 2px; }
            .group button { width: 24px; height: 24px; border-bottom: 1px solid #111; }
            hr { width: ${left ? 28 : 24}px; border: 0; border-top: 1px solid #555; margin: ${left ? '3px 0 5px' : '1px 0 2px'}; flex: none; }
            .space { height: 7px; }
        `;
    }

    template() {
        if (this.getAttribute('side') === 'left') {
            return `
                <div class="grip">◀</div>
                <div class="group">${iconButton('cone', 17, 'right', 'on')}${iconButton('tiles', 17, 'right')}${iconButton('ycube', 17, 'right')}</div>
                <hr>
                ${iconButton('arrow', 19, 'right')}${iconButton('lock', 16, '', 'on')}${iconButton('move', 19)}${iconButton('rotate', 19)}${iconButton('scale', 19)}${iconButton('pose', 18)}${iconButton('handle', 19, 'right')}
                <hr>
                ${iconButton('maggrid', 20, 'right')}${iconButton('magcurve', 20, 'right')}${iconButton('magpoint', 20, 'right')}${iconButton('magnet', 20, 'right')}
                <hr>
                ${iconButton('camera', 20, 'right', 'on')}${iconButton('globe', 20)}${iconButton('cap', 20, 'right')}
                <span class="grow"></span>
                ${iconButton('sketch', 17, 'right')}${iconButton('reel', 19, 'right')}
            `;
        }
        return `
            <div class="grip">▶</div>
            ${iconButton('plane', 16, 'right', 'on')}${iconButton('greenbox', 14, 'right')}${iconButton('padlock', 17)}${iconButton('bulboff', 17)}${iconButton('balls', 15, 'right')}${iconButton('bulbon', 16, 'right', 'on')}${iconButton('bulbring', 15, 'right')}${iconButton('checker', 16, 'right', 'on')}${iconButton('spoons', 15, 'down')}${iconButton('spoonplay', 15, 'right')}
            <hr>
            ${iconButton('dot', 17)}${iconButton('normal', 14)}${iconButton('normal2', 14)}<button aria-label="Point numbers">${icon('num', 15, '', '12')}</button>${iconButton('prim', 13)}<button aria-label="Primitive numbers">${icon('primnum', 15, '', '12')}</button>${iconButton('curve', 15)}${iconButton('hull', 14)}${iconButton('uv', 14, 'right')}${iconButton('diamond', 14)}${iconButton('greenstar', 14)}${iconButton('axes', 14)}${iconButton('list', 16)}${iconButton('image', 14, 'right', 'on')}
            <hr>
            <span class="space"></span>
            ${iconButton('mappin', 16, 'right', 'on')}
            <span class="grow"></span><hr>
            ${iconButton('info', 15)}${iconButton('quad', 14, '', 'on')}${iconButton('eye', 14, 'right')}
        `;
    }
}
customElements.define('side-toolbar', SideToolbar);

class SceneViewport extends UiElement {
    styles() {
        return `
            :host { display: block; position: relative; flex: 1; min-width: 0; overflow: hidden; background: linear-gradient(#658291, #90a2a9 54%, #a3b1b4 70%, #bec8c6); }
            svg.ground { position: absolute; inset: 0; width: 100%; height: 100%; }
            .mask { position: absolute; top: 0; bottom: 0; width: 11.3%; background: rgba(18, 14, 12, .34); }
            .title { position: absolute; left: 15px; top: 12px; display: flex; align-items: center; gap: 8px; font: bold 14px/20px var(--ui); color: #fff; text-shadow: 1px 1px 2px #000; }
            .cams { position: absolute; right: 4px; top: 5px; display: flex; gap: 7px; }
            .cams button { height: 20px; padding: 0 6px; gap: 2px; border: 1px solid #aaa; border-radius: 10px; color: #e8e8e8; background: rgba(60, 70, 75, .4); }
            .cams i { border: 4px solid transparent; border-top-color: #e8e8e8; border-bottom: 0; }
            .hint { position: absolute; left: 4px; right: 4px; bottom: 4px; margin: 0; padding: 2px 4px 4px; background: rgba(200, 209, 206, .6); color: #1d2223; line-height: 15px; }
        `;
    }

    // one-point perspective floor: rows fall off as 1/depth below the horizon
    floor() {
        const hx = 508, hy = 366;
        let out = '';
        for (let n = -1; n < 20; n++) {
            const d = 1 / (0.00386 + 0.001 * n);
            const tilt = d * 0.0155;
            out += `<path d="M0 ${(hy + d - tilt).toFixed(1)}L969 ${(hy + d + tilt).toFixed(1)}" stroke-width="${(n - 1) % 5 ? 1 : 2}" stroke-opacity="${Math.min(0.42, (d - 30) / 100).toFixed(2)}" stroke="#52636b"/>`;
        }
        for (let k = -28; k <= 28; k++) {
            const s = 0.167 + 0.9 * k;
            out += `<path d="M${(hx + 41 * s).toFixed(1)} ${hy + 41}L${(hx + 420 * s).toFixed(1)} ${hy + 420}" stroke-width="${k % 5 ? 1 : 2}" stroke="url(#fade)"/>`;
        }
        return out;
    }

    template() {
        return `
            <svg class="ground" viewBox="0 0 969 751" preserveAspectRatio="none" fill="none" aria-hidden="true">
                <defs><linearGradient id="fade" gradientUnits="userSpaceOnUse" x1="0" y1="405" x2="0" y2="500"><stop offset="0" stop-color="#52636b" stop-opacity=".05"/><stop offset="1" stop-color="#52636b" stop-opacity=".42"/></linearGradient></defs>
                ${this.floor()}
                <path fill="#a16468" fill-opacity=".6" fill-rule="evenodd" d="M487 563q0-7 14-7h14q14 0 14 7t-14 7h-14q-14 0-14-7zM500 563q0 5 8 5t8-5-8-5-8 5z"/>
                <path fill="#5e6299" fill-opacity=".6" fill-rule="evenodd" d="M556 582q2-6 18-6h30q16 0 18 6-2 6-18 6h-30q-16 0-18-6zM567 582q2 3 12 3h20q10 0 12-3-2-3-12-3h-20q-10 0-12 3z"/>
                <g stroke="#55626f" stroke-opacity=".35" stroke-width="3">
                    <path d="M533 475h32M535 479h30M533 470h30" stroke="#4a5675" stroke-dasharray="7 1 12 2" stroke-opacity=".45"/><path d="M540 467h12" stroke-width="1"/>
                    <path d="M524 435h20M518 416h16" stroke-opacity=".25"/><path d="M540 540h10M536 514h8M532 494h8" stroke-width="2"/><path d="M706 571h20M890 571h30M340 569h15M160 567h20" stroke-width="2" stroke-opacity=".25"/>
                    <path d="M556 628h18M556 632h16M558 636h16" stroke="#5e6289" stroke-dasharray="7 1"/>
                </g>
                <ellipse cx="586" cy="729" rx="10" ry="2" stroke="#5e6299" stroke-opacity=".2" stroke-width="2"/>
                <path d="M588 242l6 2M614 258l3-14" stroke="#a3a792" stroke-opacity=".25" stroke-width="3"/>
            </svg>
            <div class="mask" style="left:0"></div>
            <div class="mask" style="right:0"></div>
            <div class="title">${icon('camera', 27)}View</div>
            <div class="cams"><button>Persp<i></i></button><button>cam1<i></i></button></div>
            <p class="hint">Left mouse tumbles. Middle pans. Right dollies. Ctrl+Alt+Left box-zooms. Ctrl+Right zooms. Spacebar-Ctrl-Left tilts. Hold L for alternate tumble, dolly, and zoom. M or Alt+M for First Person Navigation.</p>
        `;
    }
}
customElements.define('scene-viewport', SceneViewport);

class ScenePane extends UiElement {
    styles() {
        return `
            :host { display: flex; flex-direction: column; flex: 1; min-width: 0; background: #393939; }
            .bar { display: flex; align-items: center; flex: none; height: 32px; padding-right: 6px; background: #2e2e2e; border-top: 1px solid #555; border-bottom: 1px solid #000; }
            .grip { width: 9px; align-self: stretch; border-right: 1px solid #000; background: linear-gradient(90deg, #505050, #303030); color: #000; font-size: 7px; line-height: 8px; margin-right: 7px; }
            .mid { flex: 1; display: flex; align-items: center; justify-content: center; gap: 8px; padding-left: 6px; }
            .mid button { width: 25px; height: 24px; }
            .mid .on { width: 22px; background: var(--active); }
            .mid hr { width: 1px; height: 22px; margin: 0; border: 0; background: #444; }
            .mid .tight { display: flex; align-items: center; gap: 3px; }
            .view { flex: 1; display: flex; min-height: 0; }
            .end { display: flex; gap: 8px; }
        `;
    }

    template() {
        return `
            <pane-tabs tabs="Scene View:83,Animation Editor:108,Render View:87,Composite View:103,Motion FX View:98,Geometry Spreadsheet:127"></pane-tabs>
            <path-bar icon="clap" path="obj" extra></path-bar>
            <div class="bar">
                <div class="grip">▲</div>
                ${iconButton('dots', 15, 'down')}
                <div class="mid">
                    ${iconButton('tumble', 16, 'down')}${iconButton('track', 16, 'down')}${iconButton('dolly', 16, 'down')}
                    <div class="tight">
                        <button class="on" aria-label="stones">${icon('stones', 17)}</button>${iconButton('zoombox', 13)}
                        <hr>${iconButton('stop', 16)}<hr>
                        ${iconButton('bug', 17)}${iconButton('gearbox', 14)}
                    </div>
                </div>
                <div class="end">${iconButton('people', 15, 'down')}${iconButton('help', 15)}</div>
            </div>
            <div class="view">
                <side-toolbar side="left"></side-toolbar>
                <scene-viewport></scene-viewport>
                <side-toolbar side="right"></side-toolbar>
            </div>
        `;
    }
}
customElements.define('scene-pane', ScenePane);

class ParamPane extends UiElement {
    styles() {
        return `
            :host { display: flex; flex-direction: column; min-width: 0; min-height: 0; background: #333; }
            header { display: flex; align-items: center; flex: none; height: 27px; padding: 0 6px 0 7px; gap: 4px; border-bottom: 1px solid #000; background: #383838; font-size: 12px; }
            header b { width: 66px; font-size: 11px; padding-left: 2px; }
            header input { flex: 1; min-width: 0; height: 22px; padding: 0 2px; background: #131313; border: 1px solid #222; font-family: var(--mono); color: #e4e4e4; }
            header div { display: flex; gap: 11px; margin-left: 4px; }
            .fold { height: 29px; justify-content: flex-start; gap: 7px; padding-left: 8px; }
            .fold i { border: 5px solid transparent; border-left: 6px solid #ccc; border-right: 0; }
            table { border-collapse: collapse; margin-left: 3px; height: 17px; background: linear-gradient(#2f2f2f, #222); table-layout: fixed; line-height: 15px; }
            th { border: 1px solid #000; padding: 0 1px; font-weight: normal; text-align: left; }
            .list { flex: 1; display: flex; margin: 0 1px 3px 3px; border: 1px solid #1c1c1c; background: #282828; }
            .list i { width: 16px; margin-left: auto; background: #2e2e2e; border-left: 1px solid #111; border-bottom: 1px solid #000; }
            footer { display: flex; align-items: center; justify-content: center; gap: 18px; height: 9px; background: #484848; border-top: 1px solid #6a6a6a; }
            footer i { border: 3px solid transparent; border-bottom: 4px solid #999; border-top: 0; }
            footer i:last-child { border-top: 4px solid #999; border-bottom: 0; }
            footer span { width: 21px; height: 6px; background: radial-gradient(#999 1px, transparent 1px) 0 0 / 3px 3px; }
        `;
    }

    template() {
        return `
            <pane-tabs italic tabs="karmapyrofirematerial1:132,Take List:75,Performance Monitor:123"></pane-tabs>
            <path-bar icon="mat" path="mat"></path-bar>
            <header>
                ${icon('crate', 15, 'down')}<b><label for="op">Subnetwork</label></b>
                <input id="op" value="karmapyrofirematerial1">
                <div>${iconButton('gear', 15, 'down')}${iconButton('brush', 15, 'down')}${iconButton('lens', 15)}${iconButton('info', 15)}${iconButton('help', 15)}</div>
            </header>
            <button class="fold"><i></i>Pyro Material</button>
            <table>
                <colgroup><col style="width:18px"><col><col style="width:17px"><col style="width:17px"><col style="width:16px"></colgroup>
                <tr><th></th><th>Input Operators (Drag/Drop to reorder)</th><th></th><th></th><th></th></tr>
            </table>
            <div class="list"><i></i></div>
            <footer><i></i><span></span><i></i></footer>
        `;
    }
}
customElements.define('param-pane', ParamPane);

class NetworkNode extends UiElement {
    styles() {
        return `
            :host { display: block; width: max-content; }
            .type { font-size: 13px; line-height: 17px; color: #585858; }
            .name { font-size: 15px; line-height: 18px; color: #c8c8c8; }
            .wrap { position: relative; width: 121px; margin-left: -2px; }
            .box { height: 77px; display: flex; flex-direction: column; border: 2px solid #ecc10f; border-radius: 9px; background: #3d3d3d; box-shadow: 3px 3px 0 #d8d6c8; overflow: hidden; font-size: 9px; line-height: 11px; }
            .head { height: 22px; display: flex; align-items: center; padding-left: 6px; background: #c9c9c9; border-bottom: 1px solid #000; }
            .head svg { margin-left: auto; height: 22px; width: 34px; }
            .ports { flex: 1; display: flex; justify-content: space-between; padding: 2px 7px; }
            .ports div { text-align: right; }
            .foot { height: 11px; background: #c9c9c9; border-top: 1px solid #000; color: #111; padding-right: 8px; display: flex; gap: 10px; justify-content: flex-end; }
            .wrap i { position: absolute; width: 6px; height: 6px; border-radius: 3px; }
        `;
    }

    template() {
        return `
            <div class="type">Subnetwork</div>
            <div class="name">karmapyrofirematerial1</div>
            <div class="wrap">
                <div class="box">
                    <div class="head">${icon('crate', 18)}<svg viewBox="0 0 34 22"><path d="M5 0L3 22M15 0l-2 22" stroke="#777"/><path d="M26 0h8v22H24z" fill="#c06300"/></svg></div>
                    <div class="ports"><span style="color:#ddd">next</span><div><span style="color:#9a9a9a">volume</span><br><span style="color:#72bde0">properties</span><br><span style="color:#4fa968">aov_fire</span></div></div>
                    <div class="foot"><span style="color:#777">≡</span><span>=</span><span>-</span></div>
                </div>
                <i style="left:-2px;top:29px;background:#fff"></i><i style="right:-1px;top:29px;background:#aaa"></i><i style="right:-2px;top:40px;background:#72cdf0"></i><i style="right:-2px;top:51px;background:#50bd6b"></i>
            </div>
        `;
    }
}
customElements.define('network-node', NetworkNode);

class StickyNote extends UiElement {
    styles() {
        return `
            :host { display: block; width: 371px; height: 102px; border: 1px solid #eee98a; border-radius: 7px; background: #beb868; overflow: hidden; color: #111; }
            header { height: 17px; background: #e8e07a; border-bottom: 1px solid #f3ec90; }
            header button { width: 22px; height: 16px; border-right: 1px solid #d8d070; }
            header button::before { content: ""; width: 13px; height: 3px; background: #111; }
            p { margin: 0; padding: 3px; font-size: 17px; line-height: 25px; }
        `;
    }

    template() {
        return `<header><button aria-label="Collapse"></button></header><p><slot></slot></p>`;
    }
}
customElements.define('sticky-note', StickyNote);

class NetworkPane extends UiElement {
    styles() {
        return `
            :host { display: flex; flex-direction: column; min-width: 0; min-height: 0; position: relative; background: #303030; }
            .menu { display: flex; align-items: center; flex: none; height: 26px; padding-right: 4px; border-bottom: 1px solid #000; background: linear-gradient(#2e2e2e, #3a3a3a); font-size: 12px; }
            .grip { width: 9px; align-self: stretch; border-right: 1px solid #000; background: #444; color: #000; font-size: 7px; line-height: 9px; margin-right: 9px; }
            nav { display: flex; gap: 13px; }
            .tools { display: flex; gap: 9px; margin-left: auto; }
            .gap { width: 9px; }
            .canvas { flex: 1; position: relative; overflow: hidden; }
            .mode { position: absolute; right: 11px; top: 12px; font: bold 23px/32px var(--ui); color: #4a4a4a; }
            network-node { position: absolute; left: 145px; top: 105px; }
            sticky-note { position: absolute; left: 350px; top: 129px; }
            .marks { position: absolute; left: 0; top: 0; width: 100%; height: 100%; pointer-events: none; }
        `;
    }

    template() {
        return `
            <pane-tabs italic tabs="/mat:57,Tree View:78,Material Palette:101,Asset Browser:94"></pane-tabs>
            <path-bar icon="mat" path="mat"></path-bar>
            <div class="menu">
                <div class="grip">▲</div>
                <nav>${['Add', 'Edit', 'Go', 'View', 'Tools', 'Layout', 'Labs', 'Help'].map(m => `<button>${m}</button>`).join('')}</nav>
                <div class="tools">
                    ${iconButton('tools', 16)}${iconButton('tree', 15)}${iconButton('rows', 14)}<span class="gap"></span>
                    ${iconButton('palette', 14)}${iconButton('table', 15)}<span class="gap"></span>
                    ${iconButton('flow', 14)}${iconButton('sticky', 15)}${iconButton('addimg', 15)}${iconButton('crate', 16)}<span class="gap"></span>
                    ${iconButton('lens', 15)}${iconButton('eye', 15)}
                </div>
            </div>
            <div class="canvas">
                <div class="mode">VEX Builder</div>
                <network-node></network-node>
                <sticky-note>再材质层创建一个karama的爆炸材质</sticky-note>
            </div>
            <svg class="marks" fill="#ff5560" aria-hidden="true">
                <path d="M96 48l24-1-6 7 181 99L108 63l4 6z"/>
                <path d="M110 104l93 87 8-5 1 14-20-2 6-3z"/>
                <path d="M609 136L482 219l3 7-18 1 8-17 3 5z"/>
            </svg>
        `;
    }
}
customElements.define('network-pane', NetworkPane);

class TimeLine extends UiElement {
    styles() {
        return `
            :host { display: grid; grid-template-columns: repeat(64, 1fr); height: 33px; position: relative; font-size: 9px; line-height: 12px; color: #777; background: linear-gradient(#aaa, #aaa) 0 22px / 100% 1px no-repeat; }
            div { min-width: 0; }
            div::after { content: ""; display: block; width: 1px; height: 9px; margin-top: 6px; background: #999; }
            .major { color: #bbb; }
            .major::after { height: 15px; margin-top: 3px; background: #ccc; }
            output { position: absolute; right: 9px; top: 0; width: 25px; height: 18px; border: 1px solid #fff; background: #000; color: #eee; font: 11px/16px var(--mono); text-align: center; }
            output::after { content: ""; position: absolute; left: 7px; top: 16px; border: 4px solid transparent; border-top-color: #fff; border-bottom: 0; }
        `;
    }

    template() {
        const frames = Array.from({ length: 64 }, (_, i) => i + 1);
        return frames.map(f => `<div class="${f % 12 ? '' : 'major'}">${f < 64 ? f : '&nbsp;'}</div>`).join('') + '<output>64</output>';
    }
}
customElements.define('time-line', TimeLine);

class PlayBar extends UiElement {
    styles() {
        return `
            :host { display: flex; height: 74px; background: #2e2e2e; border-top: 2px solid #555; border-bottom: 3px solid #0c0c0c; border-left: 1px solid #000; }
            .grip { width: 8px; border-right: 1px solid #000; background: linear-gradient(90deg, #505050, #3a3a3a); display: flex; align-items: flex-end; justify-content: center; color: #000; font-size: 7px; margin-right: 6px; }
            .left { width: 220px; flex: none; }
            .row { display: flex; align-items: center; }
            .play { height: 27px; margin: 7px 0 8px; }
            .opts { height: 24px; }
            .row button { width: 27px; height: 100%; background: linear-gradient(#555, #3c3c3c); border-right: 1px solid #000; border-bottom: 1px solid #000; }
            .row .on { background: var(--active); }
            .row .step { width: 14px; }
            .row .dim { width: 23px; background: #3a3a3a; }
            .split { width: 4px; }
            input { font-family: var(--mono); font-size: 11px; color: #ddd; background: #131313; border: 1px solid #222; padding-left: 3px; height: 100%; width: 48px; }
            .play input { margin: 0 2px; }
            .mid { flex: 1; min-width: 0; }
            time-line { margin: 1px 0 8px; }
            .range input { width: 42px; }
            .range .off { background: #202020; }
            .range .row { gap: 3px; }
            .track { flex: 1; display: flex; align-items: center; margin: 0 2px 0 0; }
            .bar { flex: 0 0 53%; height: 3px; background: #777; display: flex; justify-content: space-between; align-items: center; }
            .bar i { border: 5px solid transparent; border-left: 5px solid #bbb; border-right: 0; }
            .bar i:last-child { border-left: 0; border-right: 5px solid #bbb; }
            .rest { flex: 1; height: 1px; background: #111; }
            .key { display: flex; align-items: center; width: 62px; flex: none; padding: 0 0 4px 3px; margin-right: 3px; }
            .key .round { width: 40px; height: 40px; border-radius: 20px; border: 1px solid #222; background: #393939; }
            .key .drop { width: 16px; height: 20px; background: #3d3d3d; border: 1px solid #222; font-size: 8px; color: #999; }
            .end { display: grid; grid-template-columns: 23px 152px; grid-template-rows: 24px 22px; gap: 5px 6px; align-content: start; padding: 7px 6px 0 0; }
            .end > button { background: linear-gradient(#505050, #404040); border: 1px solid #1c1c1c; }
            .end .keys { justify-content: space-between; padding: 0 4px 0 16px; }
            .end .keys b { font-size: 8px; color: #999; }
            ui-combo { border: 1px solid #1c1c1c; height: 22px; padding-left: 6px; }
        `;
    }

    template() {
        return `
            <div class="grip">▼</div>
            <div class="left">
                <div class="row play">
                    ${iconButton('first', 16)}${iconButton('prev', 14)}${iconButton('halt', 13, '', 'on')}${iconButton('play', 14)}${iconButton('last', 16)}
                    <input aria-label="Current frame" value="64">
                    ${iconButton('stepb', 9, '', 'step')}${iconButton('stepf', 9, '', 'step')}
                </div>
                <div class="row opts">
                    ${iconButton('anim', 17)}${iconButton('speaker', 17)}${iconButton('loop', 17, 'down')}${iconButton('clock', 17)}${iconButton('snap', 17, 'right')}${iconButton('keyrow', 16)}
                    <span class="split"></span>${iconButton('kprev', 10, '', 'dim')}${iconButton('knext', 10, '', 'dim')}
                </div>
            </div>
            <div class="mid range">
                <time-line></time-line>
                <div class="row opts">
                    <input class="off" aria-label="Global start" value="1"><input aria-label="Range start" value="1">
                    <div class="track"><div class="bar"><i></i><i></i></div><div class="rest"></div></div>
                    <input aria-label="Range end" value="64"><input class="off" aria-label="Global end" value="120">
                </div>
            </div>
            <div class="key"><button class="round" aria-label="Set key">${icon('key', 18)}</button><button class="drop" aria-label="Key menu">▼</button></div>
            <div class="end">
                ${iconButton('scope', 15, 'right')}<button class="keys">0 keys, 0/0 channels<b>▲</b></button>
                ${iconButton('wave', 14)}<ui-combo text="Key All Channels"></ui-combo>
            </div>
        `;
    }
}
customElements.define('play-bar', PlayBar);
</script>
</body>
</html>
